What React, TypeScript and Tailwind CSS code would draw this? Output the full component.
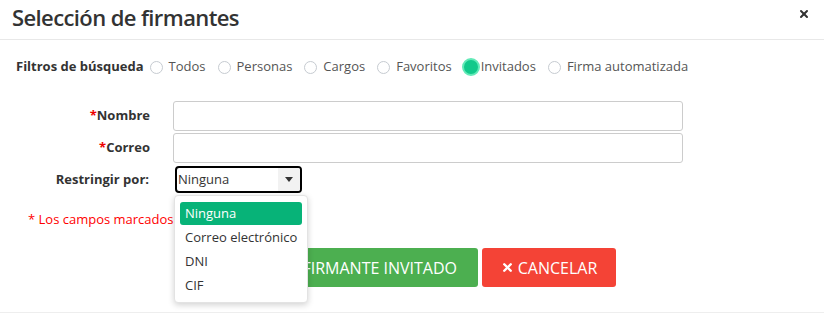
import { X } from "lucide-react";

const filtros = ["Todos", "Personas", "Cargos", "Favoritos", "Invitados", "Firma automatizada"];
const opciones = ["Ninguna", "Correo electrónico", "DNI", "CIF"];

function Radio({ label, checked }: { label: string; checked?: boolean }) {
  return (
    <label className="flex items-center">
      {checked ? (
        <span className="w-[18px] h-[18px] rounded-full bg-[#12c98b] border-2 border-[#63eab8] -ml-[2px] mr-[1px]" />
      ) : (
        <span className="w-[13px] h-[13px] rounded-full border border-[#c6cbd1] bg-white mr-[6px]" />
      )}
      <span className="text-[13px] text-[#555]">{label}</span>
    </label>
  );
}

export default function App() {
  return (
    <div
      className="w-[824px] h-[314px] bg-white overflow-hidden text-[#333]"
      style={{ fontFamily: '"Open Sans", "Noto Sans", sans-serif' }}
    >
      {/* Header */}
      <div className="flex items-center justify-between h-[40px] pl-[12px] pr-[14px] border-b border-[#e8e8e8]">
        <h2 className="text-[22px] font-semibold tracking-[-0.6px] text-[#333] leading-none -mt-[5px]">
          Selección de firmantes
        </h2>
        <X className="w-[12px] h-[12px] text-[#333] -mt-[12px]" strokeWidth={4} />
      </div>

      {/* Filtros */}
      <div className="flex items-center h-5 mt-[17px] pl-[16px] gap-[12px]">
        <span className="text-[13px] font-bold -mr-[6px]">Filtros de búsqueda</span>
        {filtros.map((f) => (
          <Radio key={f} label={f} checked={f === "Invitados"} />
        ))}
      </div>

      {/* Formulario */}
      <div className="mt-[24px] flex flex-col">
        <div className="flex items-center h-[30px]">
          <label className="w-[150px] text-right text-[13px] font-bold">
            <span className="text-[#e00]">*</span>Nombre
          </label>
          <input className="ml-[23px] w-[510px] h-[30px] border border-[#ccc] rounded-[3px]" />
        </div>
        <div className="flex items-center h-[30px] mt-[2px]">
          <label className="w-[150px] text-right text-[13px] font-bold">
            <span className="text-[#e00]">*</span>Correo
          </label>
          <input className="ml-[23px] w-[510px] h-[30px] border border-[#ccc] rounded-[3px]" />
        </div>
        <div className="flex items-center h-[27px] mt-[3px]">
          <label className="w-[149px] text-right text-[13px] font-bold">Restringir por:</label>
          <div className="relative ml-[26px]">
            <div className="flex items-center w-[127px] h-[27px] border-2 border-black rounded-[4px] overflow-hidden">
              <span className="flex-1 pl-[1px] text-[13px] text-[#333]">Ninguna</span>
              <span className="w-[22px] h-full bg-[#f2f2f2] flex items-center justify-center">
                <span className="w-0 h-0 border-l-[4px] border-r-[4px] border-t-[5px] border-l-transparent border-r-transparent border-t-[#333]" />
              </span>
            </div>
            <div className="absolute left-[-1px] top-[29px] w-[134px] h-[108px] bg-white border border-[#e3e3e3] rounded-[4px] shadow-[0_2px_6px_rgba(0,0,0,0.18)] pt-[6px] px-[5px] z-10">
              {opciones.map((o, i) => (
                <div
                  key={o}
                  className={
                    i === 0
                      ? "h-[23px] flex items-center px-[5px] rounded-[3px] bg-[#07b378] text-white text-[13px] mb-[1px] whitespace-nowrap"
                      : "h-[24px] flex items-center px-[5px] text-[13px] text-[#333] whitespace-nowrap"
                  }
                >
                  {o}
                </div>
              ))}
            </div>
          </div>
        </div>
      </div>

      <p className="mt-[17px] h-5 flex items-center pl-[28px] text-[13px] text-[#f00]">
        * Los campos marcados son obligatorios
      </p>

      {/* Botones */}
      <div className="flex justify-center gap-[4px] mt-[18px]">
        <button className="h-[39px] w-[270px] bg-[#4caf50] text-white text-[16px] rounded-[3px] flex items-center justify-end pr-[21px] whitespace-nowrap">
          <span className="mr-[10px]">AÑADIR</span>FIRMANTE INVITADO
        </button>
        <button className="h-[39px] w-[134px] bg-[#f44336] text-white text-[16px] rounded-[3px] flex items-center justify-center gap-[4px]">
          <X className="w-[13px] h-[13px]" strokeWidth={4.5} />
          CANCELAR
        </button>
      </div>

      <div className="mt-[25px] border-t border-[#eee]" />
    </div>
  );
}
